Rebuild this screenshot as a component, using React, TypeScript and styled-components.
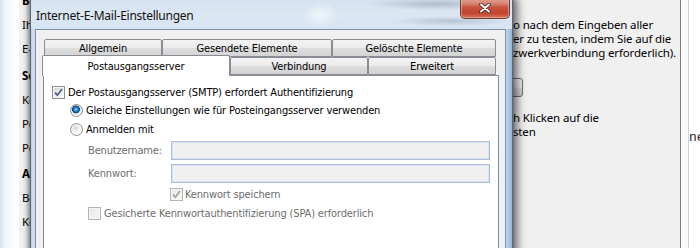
import styled, { createGlobalStyle } from "styled-components";

const GlobalStyle = createGlobalStyle`
  html, body {
    margin: 0;
    padding: 0;
  }
  body {
    width: 700px;
    height: 248px;
    overflow: hidden;
    background: #ffffff;
  }
`;

const Desktop = styled.div`
  position: relative;
  width: 700px;
  height: 248px;
  overflow: hidden;
  background: linear-gradient(90deg, #d3e2f2 0, #eef4fa 5px, #fbfcfe 12px, #ffffff 19px);
`;

/* window lying behind the dialog */
const BackWindow = styled.div`
  position: absolute;
  left: 19px;
  top: -11px;
  width: 662px;
  height: 270px;
  box-sizing: border-box;
  display: flex;
  background: #f0f0f0;
  border-right: 1px solid #7d7d7d;
  font-family: "Noto Sans", "Open Sans", sans-serif;
  font-size: 11.5px;
  letter-spacing: -0.15px;
  color: #000000;
`;

const LabelColumn = styled.div`
  width: 494px;
  padding-left: 3px;
  box-sizing: border-box;
  display: flex;
  flex-direction: column;
`;

const BackLabel = styled.div<{ $heading?: boolean; $shift?: number }>`
  height: 24px;
  line-height: 24px;
  margin-top: ${(p) => p.$shift ?? 0}px;
  font-weight: ${(p) => (p.$heading ? 700 : 400)};
  white-space: nowrap;
`;

const InfoColumn = styled.div`
  flex: 1;
  padding-top: 29px;
  display: flex;
  flex-direction: column;
`;

const InfoLine = styled.div`
  height: 14px;
  line-height: 14px;
  white-space: nowrap;
`;

const BackButton = styled.div`
  width: 40px;
  height: 19px;
  margin: 18px 0 14px -30px;
  box-sizing: border-box;
  border: 1px solid #707070;
  border-radius: 3px;
  background: linear-gradient(180deg, #f2f2f2 0, #ebebeb 50%, #dddddd 51%, #cfcfcf 100%);
`;

const SideDoc = styled.div`
  position: absolute;
  left: 682px;
  top: 0;
  width: 18px;
  height: 248px;
  box-sizing: border-box;
  display: flex;
  background: #f9f9f9;
`;

const SideDocPage = styled.div`
  margin-left: 6px;
  flex: 1;
  border-left: 1px solid #c8d4e0;
  background: #ffffff;
  padding-top: 131px;
  font-family: "Liberation Mono", monospace;
  font-size: 13px;
  line-height: 14px;
  color: #222222;
  overflow: hidden;
  white-space: nowrap;
`;

/* the dialog */
const Dialog = styled.div`
  position: absolute;
  left: 30px;
  top: -6px;
  width: 483px;
  height: 272px;
  box-sizing: border-box;
  display: flex;
  flex-direction: column;
  border: 1px solid #56677a;
  border-radius: 7px 7px 0 0;
  background: linear-gradient(
    90deg,
    #b7cce3 0,
    #d3e1f0 2px,
    #c4d7eb 4px,
    #c9dbee calc(100% - 7px),
    #b0cbe9 calc(100% - 4px),
    #96b4d6 100%
  );
  box-shadow: 4px 1px 10px 0 rgba(0, 0, 0, 0.6), -2px 0 5px rgba(0, 0, 0, 0.4);
  font-family: "DejaVu Sans Condensed", "DejaVu Sans", sans-serif;
  font-size: 11px;
  letter-spacing: -0.15px;
  color: #000000;
`;

const TitleBar = styled.div`
  height: 34px;
  box-sizing: border-box;
  padding: 6px 0 0 5px;
  display: flex;
  align-items: center;
  background:
    radial-gradient(ellipse 70px 6px at 405px 9px, rgba(105, 120, 140, 0.35), transparent),
    radial-gradient(ellipse 60px 5px at 420px 26px, rgba(105, 120, 140, 0.3), transparent),
    radial-gradient(ellipse 18px 14px at 290px 20px, rgba(255, 255, 255, 0.6), transparent),
    linear-gradient(180deg, #d2e0ef 0, #dce7f3 60%, #d6e3f1 100%);
`;

const Title = styled.span`
  font-family: "Noto Sans", "Open Sans", sans-serif;
  font-size: 12px;
  color: #111111;
  letter-spacing: -0.25px;
`;

const CloseButton = styled.div`
  position: absolute;
  top: 0;
  left: 429px;
  width: 50px;
  height: 24px;
  box-sizing: border-box;
  display: flex;
  align-items: flex-end;
  justify-content: center;
  padding-bottom: 5px;
  border: 1px solid #6a3a34;
  border-top: none;
  border-radius: 0 0 5px 5px;
  background: linear-gradient(180deg, #e9b3a6 0, #d88a78 35%, #c7503c 55%, #c2452f 80%, #d4765f 100%);
  box-shadow: inset 0 0 0 1px rgba(255, 210, 200, 0.45);
`;

const Client = styled.div`
  flex: 1;
  margin: 0 6px 0 4px;
  padding: 9px 6px 0 7px;
  display: flex;
  flex-direction: column;
  border: 1px solid #7f8fa3;
  border-bottom: none;
  background: #f0f0f0;
`;

const TabRow = styled.div<{ $inset: number }>`
  display: flex;
  align-items: flex-start;
  height: 18px;
  padding-left: ${(p) => p.$inset}px;
`;

const Tab = styled.div<{ $width: number; $active?: boolean }>`
  width: ${(p) => p.$width}px;
  height: ${(p) => (p.$active ? 21 : 18)}px;
  margin: ${(p) => (p.$active ? "-2px 0 -1px -1px" : "0")};
  box-sizing: border-box;
  display: flex;
  align-items: center;
  justify-content: center;
  border: 1px solid #898c95;
  border-bottom: ${(p) => (p.$active ? "none" : "1px solid #898c95")};
  border-radius: 2px 2px 0 0;
  background: ${(p) =>
    p.$active
      ? "#ffffff"
      : "linear-gradient(180deg, #f3f3f3 0, #ececec 48%, #dedede 52%, #d3d3d3 100%)"};
  position: ${(p) => (p.$active ? "relative" : "static")};
  z-index: ${(p) => (p.$active ? 1 : "auto")};
  padding-top: ${(p) => (p.$active ? 0 : 1)}px;
  white-space: nowrap;
`;

const Panel = styled.div`
  flex: 1;
  padding: 7px 0 0 8px;
  display: flex;
  flex-direction: column;
  border: 1px solid #898c95;
  border-bottom: none;
  background: #ffffff;
`;

const Row = styled.div<{ $height: number; $indent: number }>`
  height: ${(p) => p.$height}px;
  padding-left: ${(p) => p.$indent}px;
  display: flex;
  align-items: center;
`;

const Label = styled.span<{ $disabled?: boolean; $gap?: number }>`
  margin-left: ${(p) => p.$gap ?? 3}px;
  color: ${(p) => (p.$disabled ? "#6d6d6d" : "#000000")};
  white-space: nowrap;
`;

const FieldLabel = styled.span`
  width: 83px;
  flex: none;
  color: #6d6d6d;
  white-space: nowrap;
`;

const TextField = styled.input`
  width: 319px;
  height: 19px;
  flex: none;
  margin: 0;
  padding: 0;
  box-sizing: border-box;
  border: 1px solid #a9bfda;
  box-shadow: inset 0 0 0 1px #dbe4ee;
  background: #f0f0f0;
  outline: none;
`;

const CheckBox = styled.span<{ $disabled?: boolean }>`
  width: 13px;
  height: 13px;
  flex: none;
  box-sizing: border-box;
  display: flex;
  align-items: center;
  justify-content: center;
  border: 1px solid ${(p) => (p.$disabled ? "#b4b4b4" : "#8e8f8f")};
  background: ${(p) =>
    p.$disabled
      ? "linear-gradient(135deg, #e6e6e6 0, #f7f7f7 100%)"
      : "linear-gradient(135deg, #cfd2d6 0, #eeeeee 60%, #fbfbfb 100%)"};
  box-shadow: inset 0 0 0 1px #f6f6f6;
`;

const RadioButton = styled.span<{ $checked?: boolean }>`
  width: 13px;
  height: 13px;
  flex: none;
  box-sizing: border-box;
  border-radius: 50%;
  border: 1px solid #8e8f8f;
  background: ${(p) =>
    p.$checked
      ? "radial-gradient(circle at 45% 40%, #b8ecff 0, #3aa2e6 1.2px, #176bb8 2.6px, #0d3f7a 3.6px, #dcdcdc 4.2px, #f4f4f4 5.5px)"
      : "radial-gradient(circle at 40% 35%, #d7d7d7 0, #ececec 3px, #fbfbfb 5.5px)"};
`;

const Check = ({ color }: { color: string }) => (
  <svg width="9" height="9" viewBox="0 0 9 9">
    <path d="M1 4.6 L3.4 7.2 L8 1" fill="none" stroke={color} strokeWidth="1.7" />
  </svg>
);

const CloseGlyph = () => (
  <svg width="12" height="10" viewBox="0 0 12 10">
    <path d="M2 1.5 L10 8.5 M10 1.5 L2 8.5" stroke="#3a2a28" strokeWidth="3.6" strokeLinecap="round" />
    <path d="M2 1.5 L10 8.5 M10 1.5 L2 8.5" stroke="#ffffff" strokeWidth="2" strokeLinecap="round" />
  </svg>
);

const backLabels = [
  { text: "Benutzerinformationen", heading: true },
  { text: "Ihr Name:" },
  { text: "E-Mail-Adresse:" },
  { text: "Serverinformationen", heading: true, shift: 3 },
  { text: "Kontotyp:" },
  { text: "Posteingangsserver:" },
  { text: "Postausgangsserver (SMTP):" },
  { text: "Anmeldeinformationen", heading: true, shift: 2 },
  { text: "Benutzername:" },
  { text: "Kennwort:" },
];

const App = () => {
  return (
    <Desktop>
      <GlobalStyle />
      <BackWindow>
        <LabelColumn>
          {backLabels.map((l) => (
            <BackLabel key={l.text} $heading={l.heading} $shift={l.shift}>
              {l.text}
            </BackLabel>
          ))}
        </LabelColumn>
        <InfoColumn>
          <InfoLine>o nach dem Eingeben aller</InfoLine>
          <InfoLine>er zu testen, indem Sie auf die</InfoLine>
          <InfoLine>zwerkverbindung erforderlich).</InfoLine>
          <BackButton />
          <InfoLine>h Klicken auf die</InfoLine>
          <InfoLine>sten</InfoLine>
        </InfoColumn>
      </BackWindow>
      <SideDoc>
        <SideDocPage>ne</SideDocPage>
      </SideDoc>

      <Dialog>
        <TitleBar>
          <Title>Internet-E-Mail-Einstellungen</Title>
        </TitleBar>
        <CloseButton>
          <CloseGlyph />
        </CloseButton>
        <Client>
          <TabRow $inset={1}>
            <Tab $width={118}>Allgemein</Tab>
            <Tab $width={170}>Gesendete Elemente</Tab>
            <Tab $width={164}>Gelöschte Elemente</Tab>
          </TabRow>
          <TabRow $inset={0}>
            <Tab $width={188} $active>
              Postausgangsserver
            </Tab>
            <Tab $width={138}>Verbindung</Tab>
            <Tab $width={128}>Erweitert</Tab>
          </TabRow>
          <Panel>
            <Row $height={18} $indent={0}>
              <CheckBox>
                <Check color="#4b5f8f" />
              </CheckBox>
              <Label>Der Postausgangsserver (SMTP) erfordert Authentifizierung</Label>
            </Row>
            <Row $height={19} $indent={18}>
              <RadioButton $checked />
              <Label>Gleiche Einstellungen wie für Posteingangsserver verwenden</Label>
            </Row>
            <Row $height={19} $indent={18}>
              <RadioButton />
              <Label>Anmelden mit</Label>
            </Row>
            <Row $height={23} $indent={36}>
              <FieldLabel>Benutzername:</FieldLabel>
              <TextField disabled />
            </Row>
            <Row $height={23} $indent={36}>
              <FieldLabel>Kennwort:</FieldLabel>
              <TextField disabled type="password" />
            </Row>
            <Row $height={19} $indent={118}>
              <CheckBox $disabled>
                <Check color="#a3a3a3" />
              </CheckBox>
              <Label $disabled $gap={2}>
                Kennwort speichern
              </Label>
            </Row>
            <Row $height={19} $indent={36}>
              <CheckBox $disabled />
              <Label $disabled>Gesicherte Kennwortauthentifizierung (SPA) erforderlich</Label>
            </Row>
          </Panel>
        </Client>
      </Dialog>
    </Desktop>
  );
};

export default App;
